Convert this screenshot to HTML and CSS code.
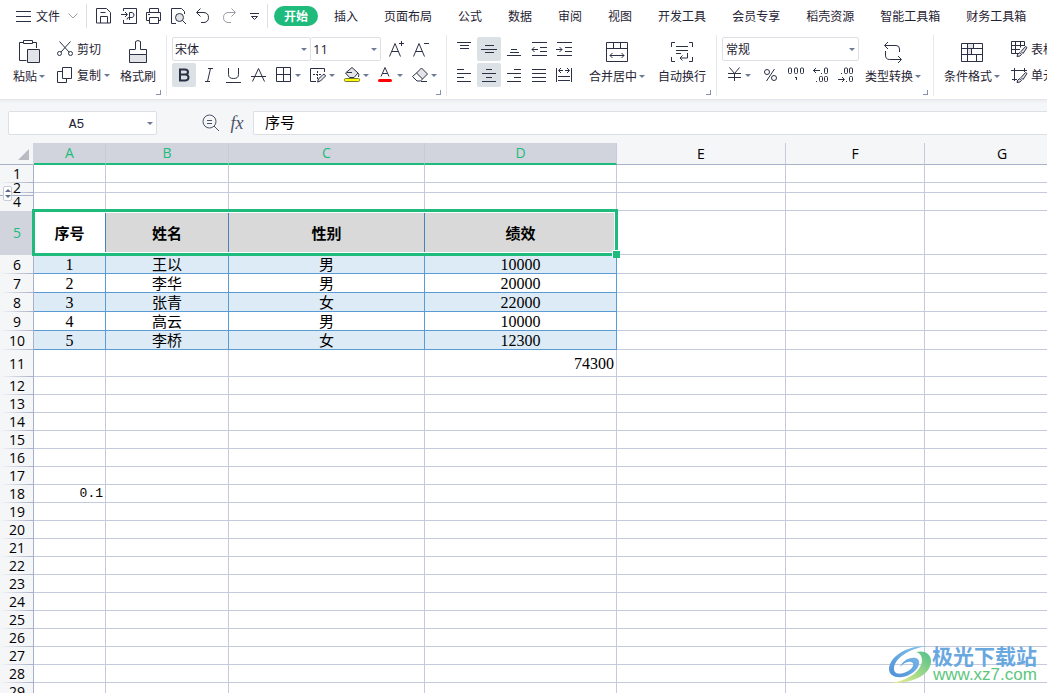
FILE: index.html
```
<!DOCTYPE html>
<html lang="zh-CN">
<head>
<meta charset="utf-8">
<title>表格</title>
<link rel="stylesheet" href="styles.css">
</head>
<body>
<div class="app">
<header class="menubar">
  <button class="file"><svg width="15" height="12"><path d="M0 1.500h15M0 6.500h15M0 11.500h15"/></svg><span>文件</span><svg class="soft" width="10" height="6"><path d="M.5.5l4.500 4.500l4.500-4.500"/></svg></button>
  <i class="divider"></i>
  <div class="quick">
    <button aria-label="保存"><svg width="16" height="16"><path d="M.5.5h10l4 4v10.500h-14zM4.500 15V8.500h7V15M4.500 4.500h5"/></svg></button>
    <button aria-label="输出"><svg width="16" height="16"><path d="M2.500 3V.5h13v15h-13V12M0 6.500h6M4 4l2.500 2.500L4 9M8.500 12V4.500h2.500q2 .5 2 2.500t-2 2.500H8q-2 0-2 2"/></svg></button>
    <button aria-label="打印"><svg width="16" height="16"><path d="M3.500 4.500V.5h9v4M3.500 12.500h-3v-8h14v8h-2M3.500 9.500h9v6h-9zM2 6.500h2"/></svg></button>
    <button aria-label="打印预览"><svg width="16" height="16"><path d="M5 15.500H.5V.5h10l3 3V6"/><circle cx="8.500" cy="9.500" r="4" class="tint"/><path d="M11.500 12.500l3.500 3.500"/></svg></button>
    <button aria-label="撤销"><svg width="16" height="16"><path d="M4.500.5l-4 4l4 4M1 4.500h7q4.500.5 4.500 5t-4.500 5H5"/></svg></button>
    <button aria-label="恢复"><svg class="soft" width="16" height="16"><path d="M10.500.5l4 4l-4 4M14 4.500H7q-4.500.5-4.500 5t4.500 5h3"/></svg></button>
    <button aria-label="更多"><svg width="16" height="16"><path d="M4 5.500h9M5.500 8.500h6l-3 3z"/></svg></button>
  </div>
  <i class="divider"></i>
  <nav class="tabs">
    <button class="current">开始</button><button>插入</button><button>页面布局</button><button>公式</button><button>数据</button><button>审阅</button><button>视图</button><button>开发工具</button><button>会员专享</button><button>稻壳资源</button><button>智能工具箱</button><button>财务工具箱</button>
  </nav>
</header>

<section class="ribbon">
  <div class="group clip">
    <button class="big narrow"><svg width="22" height="24"><path d="M5 2.500H1.500v18h7M15 2.500h3.500V8M5.500.5h9v3h-9z"/><path class="tint" d="M9.500 9.500h12v13h-12z"/></svg><span class="caret">粘贴</span></button>
    <div class="rows">
      <button class="mini"><svg width="16" height="16"><path d="M2.500.5L12 11M13.500.5L4 11"/><circle cx="2.500" cy="12.500" r="2"/><circle cx="13.500" cy="12.500" r="2"/></svg><span>剪切</span></button>
      <button class="mini"><svg width="16" height="16"><path d="M5.500.5h9v11h-9zM5.500 4.500h-5v11h9v-4"/></svg><span class="caret">复制</span></button>
    </div>
    <button class="big narrow"><svg width="20" height="24"><path d="M7.500 9V1.500q2.500-2 5 0V9.500h6v5h-17v-5h6"/><path class="tint" d="M1.500 14.500h17v8h-17z"/></svg><span>格式刷</span></button>
    <i class="corner"></i>
  </div>

  <div class="group font">
    <div class="rows">
      <div class="row joined">
        <label class="drop family"><select aria-label="字体"><option>宋体</option></select></label>
        <label class="drop size"><select aria-label="字号"><option>11</option></select></label>
        <button class="tool grow" aria-label="增大字号"><svg width="16" height="16"><path d="M.5 15.500L6 2.500l5.500 13M3 10.500h6.500M10 2.500h5M12.500 0v5"/></svg></button>
        <button class="tool" aria-label="减小字号"><svg width="16" height="16"><path d="M.5 15.500L6 2.500l5.500 13M3 10.500h6.500M11 2.500h5"/></svg></button>
      </div>
      <div class="row">
        <button class="tool on" aria-label="加粗"><svg class="heavy" width="16" height="16"><path d="M4 2.500h5q3 0 3 2.500t-3 2.500H4h5.500q3 .3 3 3t-3 3H4z"/></svg></button>
        <button class="tool" aria-label="倾斜"><svg width="16" height="16"><path d="M7 1.500h5M4 14.500h5M9.500 1.500l-3 13"/></svg></button>
        <button class="tool" aria-label="下划线"><svg width="16" height="16"><path d="M2.500 1v6.500q0 4 5 4t5-4V1M0 15.500h15"/></svg></button>
        <button class="tool" aria-label="删除线"><svg width="16" height="16"><path d="M1.500 14.500L7.500 1.500l6 13M0 9.500h15"/></svg></button>
        <button class="tool split" aria-label="边框"><svg width="16" height="16"><path d="M.5.5h14v14H.5zM7.500.5v14M.5 7.500h14"/></svg></button>
        <button class="tool split" aria-label="绘制边框"><svg width="16" height="16"><path d="M6 14.500H.5V1.500h14V5"/><path stroke-dasharray="2 1" d="M3 7.500h9M7.500 4v8"/><path class="tint" d="M8.500 12l4.500-4.500q2-1 2.500 1.500l-5 5l-3 1z"/></svg></button>
        <button class="tool split" aria-label="填充颜色"><svg width="16" height="16"><path class="tint" d="M1.500 6L8 .5l6 5.500l-4 4.500H5.500z"/><path d="M3 5.500h5M14 6q1.500 1.500.5 4"/><rect class="yellow" x=".5" y="11.500" width="15" height="3" rx="1"/></svg></button>
        <button class="tool split" aria-label="字体颜色"><svg width="16" height="16"><path d="M3 9.500L7 .5l4 9M4.500 6.500h5"/><path class="red" d="M1.500 13.500h11"/></svg></button>
        <button class="tool split" aria-label="清除"><svg width="16" height="16"><path class="tint" d="M4.500 6L9.500 1l6 6l-5 5z"/><path d="M4.500 6L.5 9.500l4.500 4.500h3.500l2-2M9 14.500h6"/></svg></button>
      </div>
    </div>
    <i class="corner"></i>
  </div>

  <div class="group align">
    <div class="rows">
      <div class="row">
        <button class="tool" aria-label="顶端对齐"><svg width="16" height="16"><path d="M1 1.500h14M4 4.500h9M4 7.500h9"/></svg></button>
        <button class="tool on" aria-label="垂直居中"><svg width="16" height="16"><path d="M4 4.500h9M0 8.500h16M4 11.500h9"/></svg></button>
        <button class="tool" aria-label="底端对齐"><svg width="16" height="16"><path d="M5 8.500h6M4 11.500h9M1 14.500h14"/></svg></button>
        <button class="tool" aria-label="减少缩进"><svg width="16" height="16"><path d="M1 1.500h15M9 6.500h7M9 10.500h7M1 14.500h15M1 8.500h6M3.500 6L1 8.500L3.500 11"/></svg></button>
        <button class="tool" aria-label="增加缩进"><svg width="16" height="16"><path d="M1 1.500h15M9 6.500h7M9 10.500h7M1 14.500h15M0 8.500h6M3.500 6L6 8.500L3.500 11"/></svg></button>
      </div>
      <div class="row">
        <button class="tool" aria-label="左对齐"><svg width="16" height="16"><path d="M1 2.500h7M1 6.500h14M1 10.500h7M1 14.500h14"/></svg></button>
        <button class="tool on" aria-label="水平居中"><svg width="16" height="16"><path d="M5 2.500h6M1 6.500h14M5 10.500h6M1 14.500h14"/></svg></button>
        <button class="tool" aria-label="右对齐"><svg width="16" height="16"><path d="M8 2.500h7M1 6.500h14M8 10.500h7M1 14.500h14"/></svg></button>
        <button class="tool" aria-label="两端对齐"><svg width="16" height="16"><path d="M1 2.500h14M1 6.500h14M1 10.500h14M1 14.500h14"/></svg></button>
        <button class="tool" aria-label="分散对齐"><svg width="16" height="16"><path d="M.5 1v14M15.500 1v14M3 3.500h4M9 3.500h4M5 1L2.500 3.500L5 6M11 1l2.500 2.500L11 6M2 9.500h12M2 13.500h12"/></svg></button>
      </div>
    </div>
    <button class="big merge"><svg width="22" height="24"><path d="M.5 2.500h21v19H.5zM.5 8.500h21M7.500 2.500v6M14.500 2.500v6M4 15.500h14M6.500 13L4 15.500L6.500 18M15.500 13l2.500 2.500l-2.500 2.500"/></svg><span class="caret">合并居中</span></button>
    <button class="big wrap"><svg width="22" height="24"><path d="M4 2.500H.5V7M18 2.500h3.500V7M.5 17v4.500H4M21.500 17v4.500H18M5 6.500h12M5 10.500h12M5 13.500h5M16.500 13v5H9M11.500 15.500L9 18l2.500 2.500"/></svg><span>自动换行</span></button>
    <i class="corner"></i>
  </div>

  <div class="group number">
    <div class="rows">
      <label class="drop format"><select aria-label="数字格式"><option>常规</option></select></label>
      <div class="row">
        <button class="tool split wide" aria-label="货币"><svg width="16" height="16"><path d="M3.500.5l5 6l5-6M2 6.500h13M2 10.500h13M8.500 6v8"/></svg></button>
        <button class="tool" aria-label="百分比"><svg width="16" height="16"><path d="M11.500 2L3.500 14"/><circle cx="4" cy="5" r="2.500"/><circle cx="11" cy="11" r="2.500"/></svg></button>
        <button class="tool" aria-label="千位分隔"><svg width="18" height="16"><rect x="1.500" y="1" width="3" height="5.500" rx="1"/><rect x="7.500" y="1" width="3" height="5.500" rx="1"/><rect x="13.500" y="1" width="3" height="5.500" rx="1"/><path d="M8 10.500h2M9.500 10v3"/></svg></button>
        <button class="tool" aria-label="增加小数位"><svg width="16" height="16"><path d="M0 3.500h7M3 1L.5 3.500L3 6M8 6.500h1M3 14.500h1"/><rect x="11.500" y="1" width="3" height="5.500" rx="1"/><rect x="6.500" y="9.500" width="3" height="5" rx="1"/><rect x="11.500" y="9.500" width="3" height="5" rx="1"/></svg></button>
        <button class="tool" aria-label="减少小数位"><svg width="16" height="16"><path d="M0 12.500h6M4 10L6.500 12.500L4 15M8 14.500h1M3 6.500h1"/><rect x="11.500" y="1" width="3" height="5.500" rx="1"/><rect x="6.500" y="1" width="3" height="5.500" rx="1"/><rect x="11.500" y="9.500" width="3" height="5" rx="1"/></svg></button>
      </div>
    </div>
    <button class="big type"><svg width="20" height="24"><path d="M5 2L1.500 5.500L5 9M2 5.500h11q3.500 0 3.500 3.500v3M2.500 11v4q0 4.500 4 4.500H18M15 16l3.500 3.500L15 23"/></svg><span class="caret">类型转换</span></button>
    <i class="corner"></i>
  </div>

  <div class="group style">
    <button class="big"><svg width="22" height="24"><path class="tint" d="M6.500 3.500h6v5h-6zM6.500 8.500h4v6h-4z"/><path d="M.5 3.500h21v18H.5zM.5 8.500h21M.5 14.500h21M6.500 3.500v18M12.500 3.500v5M10.500 8.500v6M15.500 14.500v7"/></svg><span class="caret">条件格式</span></button>
    <div class="rows">
      <button class="mini"><svg width="16" height="16"><path d="M7 12.500H.5V.5h13V5M.5 4.500h13M.5 8.500H9M4.500.5v12M9.500.5v6"/><path class="tint" d="M6 15.500q0-3 3-4l1.500 2q-1 2-4.500 2zM10 10.500l4.500-5l1.500 1l-4 6z"/></svg><span>表格样式</span></button>
      <button class="mini"><svg width="16" height="16"><path d="M0 3.500h16M3.500 1v13M1 12.500h5M13.500 1v4"/><path class="tint" d="M6 15.500q0-3 3-4l1.500 2q-1 2-4.500 2zM10 10.500l4.500-5l1.500 1l-4 6z"/></svg><span>单元格样式</span></button>
    </div>
  </div>
</section>

<section class="formula">
  <label class="drop namebox"><input aria-label="名称框" value="A5"></label>
  <button class="find" aria-label="查找"><svg width="18" height="18"><circle cx="7.500" cy="7.500" r="6.500"/><path d="M5 6.500h5M5 9.500h5M12 12l5 5"/></svg></button>
  <button class="fx" aria-label="插入函数">fx</button>
  <input class="content" aria-label="编辑栏" value="序号">
</section>

<main class="sheet">
<table class="grid">
<colgroup><col class="ch"><col class="ca"><col class="cb"><col class="cc"><col class="cd"><col class="ce"><col class="cf"><col></colgroup>
<thead><tr><th class="all"></th><th class="sel">A</th><th class="sel">B</th><th class="sel">C</th><th class="sel">D</th><th>E</th><th>F</th><th>G</th></tr></thead>
<tbody>
<tr><th>1</th><td></td><td></td><td></td><td></td><td></td><td></td><td></td></tr>
<tr class="short"><th>2<button class="unhide" aria-label="展开隐藏行"></button></th><td></td><td></td><td></td><td></td><td></td><td></td><td></td></tr>
<tr class="after"><th>4</th><td></td><td></td><td></td><td></td><td></td><td></td><td></td></tr>
<tr class="title"><th>5</th><td class="active">序号<span class="range"></span></td><td>姓名</td><td>性别</td><td>绩效</td><td></td><td></td><td></td></tr>
<tr class="data band"><th>6</th><td class="num">1</td><td>王以</td><td>男</td><td class="num">10000</td><td></td><td></td><td></td></tr>
<tr class="data"><th>7</th><td class="num">2</td><td>李华</td><td>男</td><td class="num">20000</td><td></td><td></td><td></td></tr>
<tr class="data band"><th>8</th><td class="num">3</td><td>张青</td><td>女</td><td class="num">22000</td><td></td><td></td><td></td></tr>
<tr class="data"><th>9</th><td class="num">4</td><td>高云</td><td>男</td><td class="num">10000</td><td></td><td></td><td></td></tr>
<tr class="data band"><th>10</th><td class="num">5</td><td>李桥</td><td>女</td><td class="num open">12300</td><td></td><td></td><td></td></tr>
<tr class="tall"><th>11</th><td></td><td></td><td></td><td class="num end">74300</td><td></td><td></td><td></td></tr>
<tr><th>12</th><td></td><td></td><td></td><td></td><td></td><td></td><td></td></tr>
<tr><th>13</th><td></td><td></td><td></td><td></td><td></td><td></td><td></td></tr>
<tr><th>14</th><td></td><td></td><td></td><td></td><td></td><td></td><td></td></tr>
<tr><th>15</th><td></td><td></td><td></td><td></td><td></td><td></td><td></td></tr>
<tr><th>16</th><td></td><td></td><td></td><td></td><td></td><td></td><td></td></tr>
<tr><th>17</th><td></td><td></td><td></td><td></td><td></td><td></td><td></td></tr>
<tr><th>18</th><td class="num end mono">0.1</td><td></td><td></td><td></td><td></td><td></td><td></td></tr>
<tr><th>19</th><td></td><td></td><td></td><td></td><td></td><td></td><td></td></tr>
<tr><th>20</th><td></td><td></td><td></td><td></td><td></td><td></td><td></td></tr>
<tr><th>21</th><td></td><td></td><td></td><td></td><td></td><td></td><td></td></tr>
<tr><th>22</th><td></td><td></td><td></td><td></td><td></td><td></td><td></td></tr>
<tr><th>23</th><td></td><td></td><td></td><td></td><td></td><td></td><td></td></tr>
<tr><th>24</th><td></td><td></td><td></td><td></td><td></td><td></td><td></td></tr>
<tr><th>25</th><td></td><td></td><td></td><td></td><td></td><td></td><td></td></tr>
<tr><th>26</th><td></td><td></td><td></td><td></td><td></td><td></td><td></td></tr>
<tr><th>27</th><td></td><td></td><td></td><td></td><td></td><td></td><td></td></tr>
<tr><th>28</th><td></td><td></td><td></td><td></td><td></td><td></td><td></td></tr>
<tr><th>29</th><td></td><td></td><td></td><td></td><td></td><td></td><td></td></tr>
</tbody>
</table>
<div class="mark">
  <svg width="44" height="42" viewBox="0 0 44 42">
    <defs>
      <linearGradient id="blue" x1="0" y1="1" x2="1" y2="0"><stop offset="0" stop-color="#4d8fd6"/><stop offset="1" stop-color="#86c8ee"/></linearGradient>
      <linearGradient id="lime" x1="0" y1="1" x2="1" y2="0"><stop offset="0" stop-color="#eff08a"/><stop offset="1" stop-color="#4fc08a"/></linearGradient>
    </defs>
    <path fill="url(#blue)" d="M39 2C20 1 1 11 0 25c0 6 6 9 13 8c8-1 16-7 17-13c1-4-2-7-7-6c-5 0-10 4-12 9c3-3 7-6 11-5c5 1 1 8-5 10c-6 3-12 2-12-3C5 14 21 4 39 2z"/>
    <path fill="url(#lime)" d="M27 8c7-2 15 1 15 9c0 13-16 22-39 22c17-3 29-12 30-22c0-5-2-8-6-9z"/>
  </svg>
  <div class="words"><b>极光下载站</b><span>www.xz7.com</span></div>
</div>
</main>
</div>
</body>
</html>
```

FILE: styles.css
```
* { box-sizing: border-box; }
body {
  margin: 0;
  background: #fff;
  color: #1f2333;
  font: 12px/18px "Noto Sans CJK SC", sans-serif;
}
.app { height: 100vh; display: flex; flex-direction: column; overflow: hidden; }
button, select, input { font: inherit; color: inherit; margin: 0; padding: 0; border: 0; background: none; outline: 0; }
button { white-space: nowrap; flex: none; }
svg { display: block; flex: none; fill: none; stroke: #2b3044; overflow: visible; }
.soft { stroke: #9a9da6; }
.tint { fill: #e2e4e7; }
.yellow { fill: #ff0; stroke: #77793e; }
.red { stroke: #f00; stroke-width: 3; stroke-linecap: round; }
.heavy { stroke-width: 2; }

.menubar { display: flex; align-items: center; height: 32px; flex: none; }
.file { display: flex; align-items: center; gap: 8px; width: 86px; padding-left: 16px; }
.file svg:first-child { margin-right: -3px; }
.divider { width: 1px; height: 24px; background: #dcdee3; flex: none; }
.quick { display: flex; gap: 9px; width: 180px; padding-left: 9px; }
.tabs { display: flex; gap: 6px; padding-left: 6px; }
.tabs button { height: 20px; padding: 0 10px; line-height: 20px; border-radius: 10px; }
.tabs .current { background: #1fbb7d; color: #fff; font-weight: 700; }

.ribbon { display: flex; height: 68px; flex: none; padding: 3px 0; border-bottom: 1px solid #e3e5e8; }
.group { position: relative; display: flex; flex: none; padding: 2px 5px 0; border-right: 1px solid #e6e8ec; }
.group.style { border: 0; padding-left: 7px; gap: 4px; }
.clip { gap: 3px; padding: 2px 7px 0 8px; }
.align { padding-right: 6px; }
.number { padding-right: 9px; }
.corner { position: absolute; right: 5px; bottom: 1px; width: 5px; height: 5px; border: solid #8791ad; border-width: 0 1px 1px 0; }
.rows { display: flex; flex-direction: column; gap: 2px; }
.row { display: flex; gap: 1px; }
.joined { gap: 0; }
.big { display: flex; flex-direction: column; align-items: center; gap: 3px; width: 62px; height: 52px; padding-top: 3px; }
.narrow { width: 42px; }
.wrap { width: 56px; margin-left: 6px; }
.merge { margin-left: 10px; }
.type { margin-left: 3px; }
.mini { display: flex; align-items: center; gap: 4px; height: 24px; padding: 0 4px; }
.tool { display: flex; align-items: center; justify-content: center; width: 24px; height: 24px; border-radius: 2px; }
.on { background: #dce1e6; }
.split { width: 33px; justify-content: flex-start; padding-left: 4px; }
.wide { width: 36px; }
.grow { margin-left: 4px; }
.caret::after, .split::after, .drop::after {
  content: "";
  border: solid transparent;
  border-width: 3px 3px 0;
  border-top-color: #6d7a96;
}
.caret { display: flex; align-items: center; gap: 2px; }
.mini .caret { gap: 3px; }
.split { gap: 3px; }
.drop { position: relative; display: block; height: 24px; border: 1px solid #dcdfe4; border-radius: 2px; background: #fff; }
.drop::after { position: absolute; right: 3px; top: 10px; }
.drop select { appearance: none; display: block; width: 100%; height: 22px; padding: 0 2px; }
.family { width: 139px; }
.size { width: 70px; border-left: 0; }
.size select { font: 13px "Open Sans", sans-serif; }
.format { width: 137px; }
.format select { padding-left: 3px; }

.formula {
  display: flex;
  flex: none;
  height: 43px;
  padding: 11px 0 0 8px;
  background: linear-gradient(#eceef1, #f5f6f8 4px);
}
.namebox { width: 149px; }
.namebox input { display: block; width: 100%; height: 22px; padding: 3px 12px 0 0; text-align: center; font: 13px "Liberation Mono", monospace; }
.find { width: 18px; height: 24px; margin-left: 45px; }
.find svg, .fx { stroke: #4b5468; color: #4b5468; }
.fx { width: 18px; height: 24px; margin-left: 8px; font: italic 18px/20px "Liberation Serif", serif; }
.content { flex: 1; min-width: 0; height: 24px; margin-left: 7px; padding: 0 11px 4px; border: 1px solid #dcdfe4; border-right: 0; border-radius: 2px 0 0 2px; background: #fff; color: #000; font-size: 15px; }

.sheet { position: relative; flex: 1; min-height: 0; overflow: hidden; }
.grid { width: 100%; min-width: 1080px; table-layout: fixed; border-collapse: separate; border-spacing: 0; color: #000; line-height: 16px; }
.ch { width: 34px; }
.ca { width: 72px; }
.cb { width: 123px; }
.cc { width: 196px; }
.cd { width: 192px; }
.ce { width: 169px; }
.cf { width: 139px; }
.grid tr { height: 18px; }
.grid th, .grid td { padding: 0; border: solid #c5cadc; border-width: 0 1px 1px 0; text-align: center; vertical-align: middle; white-space: nowrap; }
.grid td { font-size: 15px; }
.grid th { position: relative; background: #f5f6f8; font: 14px/16px "Open Sans", sans-serif; }
.grid thead tr { height: 22px; }
.grid thead th { border-bottom-color: #a9b0c8; }
.grid thead .sel { background: #d1d4dc; border-right-color: #c5cadc; border-bottom: 2px solid #1fbb7d; color: #1fbb7d; }
.grid .all { border-right-color: #d1d4dc; }
.all::after { content: ""; position: absolute; right: 4px; bottom: 4px; border: solid transparent; border-width: 0 0 11px 11px; border-bottom-color: #b9bbc0; }
.grid tbody th { padding-left: 1px; border-width: 0 1px 0 0; border-color: #a9b0c8; background: linear-gradient(to right, #f5f6f8, #a9b0c8) bottom / 100% 1px no-repeat #f5f6f8; }
.grid .short { height: 10px; }
.grid .short th { line-height: 8px; }
.grid .short td { line-height: 8px; }
.grid .after th { background: linear-gradient(#a9b0c8, #a9b0c8) 0 2px / 100% 1px no-repeat #f5f6f8; }
.unhide { position: absolute; z-index: 1; left: 3px; top: 3px; width: 9px; height: 15px; border: 1px solid #c9ccd4; border-radius: 2px; background: #fff; }
.unhide::before, .unhide::after { content: ""; position: absolute; left: 1px; border: solid transparent; }
.unhide::before { top: 2px; border-width: 0 3px 3px; border-bottom-color: #5f6d8c; }
.unhide::after { bottom: 2px; border-width: 3px 3px 0; border-top-color: #5f6d8c; }
.grid .title { height: 44px; }
.grid .title th { background: #d1d4dc; color: #1fbb7d; }
.title td { font-weight: 700; }
.title td:nth-child(n+3):nth-child(-n+5) { background: #d9d9d9; }
.grid .title td:nth-child(-n+4) { border-right-color: #4a80b8; }
.active { position: relative; }
.range { position: absolute; z-index: 2; left: -2px; top: -2px; width: 586px; height: 47px; border: 3px solid #1fbb7d; box-shadow: inset 0 0 0 1px #fff; pointer-events: none; }
.range::after { content: ""; position: absolute; right: -5px; bottom: -5px; width: 7px; height: 7px; border: 1px solid #fff; border-width: 1px 0 0 1px; background: #1fbb7d; }
.grid .data { height: 19px; }
.grid .data td:nth-child(-n+5) { border-color: #5b9bd5; }
.band td:nth-child(-n+5) { background: #ddebf7; }
.grid .data .open { border-bottom-color: #ddebf7; }
.grid .num { padding-top: 1px; font: 16px/16px "Liberation Serif", serif; }
.grid .end { padding-right: 2px; text-align: right; }
.grid .mono { font: 13px/16px "Liberation Mono", monospace; }
.grid .tall { height: 27px; }

.mark { position: absolute; right: 10px; bottom: 7px; display: flex; align-items: center; }
.mark svg { stroke: none; margin-right: -1px; }
.words { display: flex; flex-direction: column; }
.words b { font-size: 21px; line-height: 20px; color: #69a8df; }
.words span { font: 17px/20px "Liberation Sans", sans-serif; color: #5cc67c; padding-left: 1px; }
```
